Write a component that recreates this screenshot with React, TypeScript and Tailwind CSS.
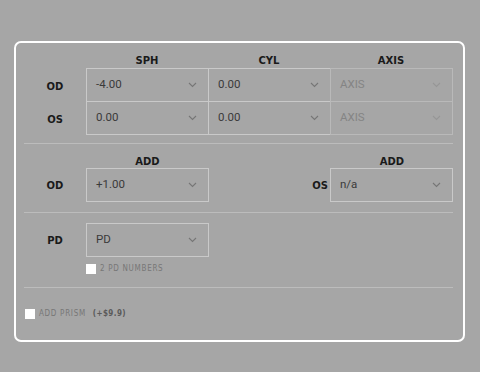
import React from "react";

const Chevron = ({ faint }: { faint?: boolean }) => (
  <svg width="9" height="6" viewBox="0 0 9 6" className="shrink-0">
    <path d="M1 1 L4.5 4.5 L8 1" fill="none" stroke={faint ? "#969696" : "#767676"} strokeWidth="1.1" />
  </svg>
);

const Box = ({ value, faint, cls = "" }: { value: string; faint?: boolean; cls?: string }) => (
  <div
    className={`w-[123px] h-[34px] border flex items-center justify-between pl-[9px] pr-[11px] ${
      faint ? "border-[#b9b9b9] text-[#848484]" : "border-[#c9c9c9] text-[#3a3a3a]"
    } ${cls}`}
  >
    <span className="text-[11.5px]" style={{ fontFamily: 'Roboto, "Liberation Sans", sans-serif' }}>{value}</span>
    <Chevron faint={faint} />
  </div>
);

const Label = ({ children, cls = "" }: { children: React.ReactNode; cls?: string }) => (
  <span className={`text-[10px] font-bold text-[#1a1a1a] ${cls}`}>{children}</span>
);

const small = { fontFamily: '"DejaVu Sans Condensed", "DejaVu Sans", sans-serif' };

export default function App() {
  return (
    <div
      className="w-[480px] h-[372px] bg-[#a6a6a6] pt-[41px] pl-[14px] overflow-hidden"
      style={{ fontFamily: '"DejaVu Sans", Verdana, sans-serif' }}
    >
      <div className="w-[451px] h-[301px] border-2 border-white rounded-[7px] pl-[8px] pr-[10px]">
        {/* Section 1 */}
        <div className="pt-[7px]">
          <div className="flex h-[18px] items-center">
            <div className="w-[62px]" />
            <div className="w-[122px] text-center"><Label>SPH</Label></div>
            <div className="w-[122px] text-center"><Label>CYL</Label></div>
            <div className="w-[122px] text-center"><Label>AXIS</Label></div>
          </div>
          <div className="flex items-center">
            <div className="w-[62px] text-center"><Label>OD</Label></div>
            <Box value="-4.00" />
            <Box value="0.00" cls="-ml-px" />
            <Box value="AXIS" faint cls="-ml-px" />
          </div>
          <div className="flex items-center -mt-px">
            <div className="w-[62px] text-center"><Label>OS</Label></div>
            <Box value="0.00" />
            <Box value="0.00" cls="-ml-px" />
            <Box value="AXIS" faint cls="-ml-px" />
          </div>
        </div>
        <div className="mt-[8px] h-px bg-[#bcbcbc]" />

        {/* Section 2 */}
        <div className="pt-[10px] flex">
          <div className="w-[62px] flex flex-col">
            <div className="h-[14px]" />
            <div className="h-[34px] flex items-center justify-center"><Label>OD</Label></div>
          </div>
          <div className="flex flex-col">
            <div className="h-[14px] text-center leading-[12px]"><Label>ADD</Label></div>
            <Box value="+1.00" />
          </div>
          <div className="w-[122px] flex flex-col">
            <div className="h-[14px]" />
            <div className="h-[34px] flex items-center justify-end pr-[3px]"><Label>OS</Label></div>
          </div>
          <div className="flex flex-col">
            <div className="h-[14px] text-center leading-[12px]"><Label>ADD</Label></div>
            <Box value="n/a" cls="-ml-px" />
          </div>
        </div>
        <div className="mt-[10px] h-px bg-[#bcbcbc]" />

        {/* Section 3 */}
        <div className="pt-[10px] flex">
          <div className="w-[62px] h-[34px] flex items-center justify-center"><Label>PD</Label></div>
          <div className="flex flex-col">
            <Box value="PD" />
            <div className="mt-[6px] flex items-center gap-[4px]">
              <div className="w-[10px] h-[10px] bg-white" />
              <span className="text-[8px] tracking-[0.7px] text-[#777]" style={small}>2 PD NUMBERS</span>
            </div>
          </div>
        </div>
        <div className="mt-[12px] h-px bg-[#bcbcbc]" />

        {/* Section 4 */}
        <div className="mt-[20px] ml-px flex items-center gap-[4px]">
          <div className="w-[10px] h-[10px] bg-white" />
          <span className="text-[8px] tracking-[0.7px] text-[#777]" style={small}>ADD PRISM</span>
          <span className="ml-[3px] text-[8px] tracking-[0.4px] text-[#5a5a5a] font-bold" style={small}>(+$9.9)</span>
        </div>
      </div>
    </div>
  );
}
